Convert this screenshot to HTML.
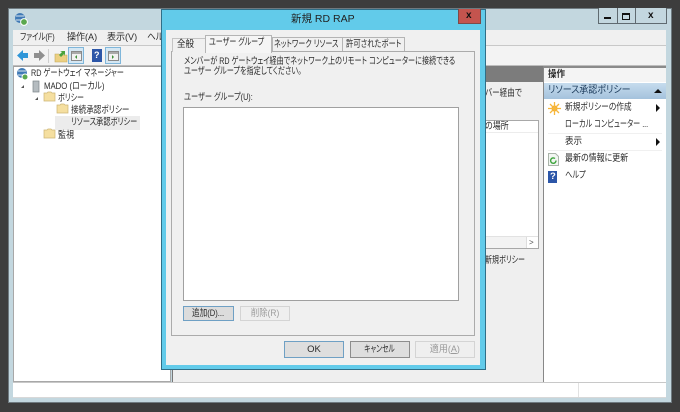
<!DOCTYPE html>
<html lang="ja"><head><meta charset="utf-8">
<style>
html,body{margin:0;padding:0;width:680px;height:412px;overflow:hidden;background:#3d3d3d}
body{position:relative;font-family:"Liberation Sans","Noto Sans CJK JP",sans-serif;font-size:9.500px;color:#2a2a2a;line-height:11px;font-feature-settings:"palt"}
.a{position:absolute;box-sizing:border-box}
.t{position:absolute;white-space:nowrap;filter:blur(.3px);transform-origin:0 50%}
.btn{position:absolute;box-sizing:border-box;text-align:center;white-space:nowrap;background:#e1e1e1;border:1px solid #adadad}
.btn span{display:inline-block;filter:blur(.3px)}
</style></head><body>
<!-- main window -->
<div class="a" style="left:8px;top:8px;width:664px;height:395px;background:#c3d7df;border:1px solid #6f7a80"></div>
<svg class="a" style="left:14px;top:12px" width="14" height="14" viewBox="0 0 14 14"><circle cx="6" cy="6" r="5" fill="#3f79b5"/><path d="M2 4h8M2 8h8" stroke="#dbe6ee"/><circle cx="10" cy="10" r="3.4" fill="#5aa84f" stroke="#fff"/></svg>
<!-- window buttons -->
<div class="a" style="left:598px;top:8px;width:69px;height:16px;background:#c3d7df;border:1px solid #5f6a70;border-top:0"></div>
<div class="a" style="left:617px;top:8px;width:1px;height:15px;background:#5f6a70"></div>
<div class="a" style="left:635px;top:8px;width:1px;height:15px;background:#5f6a70"></div>
<div class="a" style="left:604px;top:17px;width:7px;height:2px;background:#111"></div>
<div class="a" style="left:622px;top:13px;width:8px;height:7px;border:1px solid #111;border-top-width:2px"></div>
<div class="t" style="left:648px;top:10px;font-size:10px;font-weight:bold;color:#111">x</div>
<!-- menu and toolbar -->
<div class="a" style="left:13px;top:30px;width:653px;height:16px;background:#f0f0f0;border-bottom:1px solid #c8c8c8"></div>
<div class="a" style="left:13px;top:46px;width:653px;height:20px;background:#f3f3f3;border-bottom:1px solid #bdbdbd"></div>
<div class="t" style="left:20px;top:32px;transform:scaleX(.77)">ファイル(F)</div>
<div class="t" style="left:67px;top:32px;transform:scaleX(.95)">操作(A)</div>
<div class="t" style="left:107px;top:32px;transform:scaleX(.95)">表示(V)</div>
<div class="t" style="left:147px;top:32px;transform:scaleX(.9)">ヘルプ</div>
<svg class="a" style="left:15px;top:46px" width="112" height="20" viewBox="0 0 112 20">
<path d="M2 9.500 8 4v3h5v5H8v3z" fill="#2f96d8"/>
<path d="M30 9.500 24 4v3h-5v5h5v3z" fill="#8f8f8f"/>
<rect x="33" y="3" width="1" height="14" fill="#cfcfcf"/>
<path d="M40 8h4l1 1h7v7H40z" fill="#ecd082" stroke="#c4a95c" stroke-width=".6"/>
<path d="M44 9l3-3-2-1h5v5l-1-2-3 3z" fill="#4aa33c"/>
<rect x="53.500" y="1.500" width="15" height="16" fill="#d5e7f3" stroke="#7fb6da"/>
<rect x="56.500" y="5.500" width="10" height="9" fill="#f2f2f2" stroke="#8a8a8a"/><path d="M57 6h9v2h-9z" fill="#aaa"/><path d="M62 9v4l-2-2z" fill="#3f8f3a"/>
<rect x="77" y="3" width="10" height="13" fill="#2c56a8"/>
<rect x="90.500" y="1.500" width="15" height="16" fill="#d5e7f3" stroke="#7fb6da"/>
<rect x="93.500" y="5.500" width="10" height="9" fill="#f2f2f2" stroke="#8a8a8a"/><path d="M94 6h9v2h-9z" fill="#aaa"/><path d="M97 9v4l2-2z" fill="#3f8f3a"/>
</svg>
<div class="t" style="left:94px;top:50px;color:#fff;font-size:9px;font-weight:bold">?</div>
<!-- tree panel -->
<div class="a" style="left:13px;top:66px;width:158px;height:316px;background:#fff;border:1px solid #a8a8a8;border-top-color:#a0a0a0"></div>
<svg class="a" style="left:15px;top:67px" width="70" height="76" viewBox="0 0 70 76">
<circle cx="7" cy="6" r="5" fill="#3f79b5"/><path d="M3 4h8M3 8h8" stroke="#dbe6ee"/><circle cx="10" cy="10" r="3" fill="#5aa84f" stroke="#fff"/>
<path d="M6 21l3-3v3z" fill="#555"/><rect x="18" y="14" width="6" height="11" fill="#b5bcc0" stroke="#7c8589" stroke-width=".7"/>
<path d="M20 33l3-3v3z" fill="#555"/><path d="M29 26h3l1-1h3l1 1h3v8H29z" fill="#f5dfa0" stroke="#cdb574" stroke-width=".7"/>
<path d="M42 38h3l1-1h3l1 1h3v8H42z" fill="#f5dfa0" stroke="#cdb574" stroke-width=".7"/>
<path d="M42 51h3l1-1h3l1 1h3v8H42z" fill="#f5dfa0" stroke="#cdb574" stroke-width=".7"/>
<path d="M29 63h3l1-1h3l1 1h3v8H29z" fill="#f5dfa0" stroke="#cdb574" stroke-width=".7"/>
</svg>
<div class="a" style="left:55px;top:116px;width:85px;height:14px;background:#ececec"></div>
<div class="t" style="left:31px;top:68px;transform:scaleX(.76)">RD ゲートウェイ マネージャー</div>
<div class="t" style="left:44px;top:81px;transform:scaleX(.82)">MADO (ローカル)</div>
<div class="t" style="left:58px;top:93px;transform:scaleX(.74)">ポリシー</div>
<div class="t" style="left:71px;top:105px;transform:scaleX(.8)">接続承認ポリシー</div>
<div class="t" style="left:71px;top:117px;transform:scaleX(.76)">リソース承認ポリシー</div>
<div class="t" style="left:58px;top:130px;transform:scaleX(.85)">監視</div>
<!-- middle panel -->
<div class="a" style="left:172px;top:66px;width:372px;height:316px;background:#efefef;border-left:1px solid #777;border-right:1px solid #888"></div>
<div class="a" style="left:173px;top:66px;width:370px;height:16px;background:#7c7c7c"></div>
<div class="t" style="left:485px;top:88px;transform:scaleX(.8)">バー経由で</div>
<div class="a" style="left:175px;top:120px;width:364px;height:129px;background:#fff;border:1px solid #a8a8a8"></div>
<div class="t" style="left:485px;top:121px;transform:scaleX(.84)">の場所</div>
<div class="a" style="left:176px;top:132px;width:362px;height:1px;background:#ececec"></div>
<div class="a" style="left:176px;top:236px;width:362px;height:12px;background:#f3f3f3;border-top:1px solid #e2e2e2"></div>
<div class="a" style="left:526px;top:237px;width:12px;height:11px;background:#fff;border-left:1px solid #ddd"></div>
<div class="t" style="left:529px;top:237px;color:#555;font-size:8px">&gt;</div>
<div class="t" style="left:485px;top:255px;transform:scaleX(.74)">新規ポリシー</div>
<!-- action panel -->
<div class="a" style="left:544px;top:66px;width:122px;height:316px;background:#fff;border-top:2px solid #8a8a8a"></div>
<div class="a" style="left:544px;top:68px;width:122px;height:14px;background:#f4f4f4"></div>
<div class="t" style="left:548px;top:69px;font-weight:bold;transform:scaleX(.9)">操作</div>
<div class="a" style="left:544px;top:83px;width:122px;height:16px;background:linear-gradient(#c6dcee,#a4c2dc)"></div>
<div class="t" style="left:548px;top:85px;font-size:10px;color:#1d3c5c;transform:scaleX(.9)">リソース承認ポリシー</div>
<div class="a" style="left:654px;top:89px;border:4px solid transparent;border-bottom:4px solid #111;border-top:0;width:0;height:0"></div>
<svg class="a" style="left:547px;top:101px" width="15" height="15" viewBox="0 0 15 15"><circle cx="7.500" cy="7.500" r="3" fill="#f5a623"/><path d="M7.500 1v13M1 7.500h13M3 3l9 9M12 3l-9 9" stroke="#f6b73c" stroke-width="1.300"/></svg>
<div class="t" style="left:565px;top:102px;transform:scaleX(.81)">新規ポリシーの作成</div>
<div class="a" style="left:656px;top:104px;border:4px solid transparent;border-left:4px solid #111;border-right:0;width:0;height:0"></div>
<div class="t" style="left:565px;top:119px;transform:scaleX(.75)">ローカル コンピューター ...</div>
<div class="a" style="left:548px;top:133px;width:114px;height:1px;background:#f0f0f0"></div>
<div class="t" style="left:565px;top:136px;transform:scaleX(.9)">表示</div>
<div class="a" style="left:656px;top:138px;border:4px solid transparent;border-left:4px solid #111;border-right:0;width:0;height:0"></div>
<div class="a" style="left:548px;top:150px;width:114px;height:1px;background:#f0f0f0"></div>
<svg class="a" style="left:548px;top:153px" width="11" height="13" viewBox="0 0 11 13"><path d="M.5.500h7l3 3v9H.5z" fill="#f2f6f2" stroke="#aab4aa"/><path d="M8 7.500a2.700 2.700 0 1 1-1-2" fill="none" stroke="#3ba33b" stroke-width="1.400"/></svg>
<div class="t" style="left:565px;top:153px;transform:scaleX(.84)">最新の情報に更新</div>
<div class="a" style="left:548px;top:171px;width:9px;height:12px;background:#2c56a8"></div>
<div class="t" style="left:550px;top:171px;color:#fff;font-weight:bold">?</div>
<div class="t" style="left:565px;top:170px;transform:scaleX(.76)">ヘルプ</div>
<!-- status bar -->
<div class="a" style="left:13px;top:382px;width:653px;height:16px;background:#fff;border-top:1px solid #c8c8c8;border-bottom:1px solid #d8d8d8"></div>
<div class="a" style="left:578px;top:383px;width:1px;height:14px;background:#e2e2e2"></div>
<!-- dialog -->
<div class="a" style="left:161px;top:9px;width:325px;height:361px;background:#62cbea;border:1px solid #2f6f88"></div>
<div class="a" style="left:166px;top:30px;width:314px;height:335px;background:#f0f0f0"></div>
<div class="t" style="left:291px;top:14px;font-size:10.500px;color:#222">新規 RD RAP</div>
<div class="a" style="left:458px;top:9px;width:23px;height:15px;background:#c4544e;border:1px solid #7e4a48;border-top:0"></div>
<div class="t" style="left:466px;top:10px;font-size:10px;font-weight:bold;color:#111">x</div>
<!-- tabs -->
<div class="a" style="left:171px;top:51px;width:304px;height:285px;background:#f0f0f0;border:1px solid #ababab"></div>
<div class="a" style="left:172px;top:38px;width:34px;height:14px;background:#f0f0f0;border:1px solid #c4c4c4;border-bottom:0"></div>
<div class="a" style="left:272px;top:37px;width:71px;height:14px;background:#f0f0f0;border:1px solid #b4b4b4;border-bottom:0"></div>
<div class="a" style="left:342px;top:37px;width:63px;height:14px;background:#f0f0f0;border:1px solid #b4b4b4;border-bottom:0"></div>
<div class="a" style="left:205px;top:35px;width:67px;height:18px;background:#f5f5f5;border:1px solid #b4b4b4;border-bottom:0"></div>
<div class="t" style="left:177px;top:39px;transform:scaleX(.9)">全般</div>
<div class="t" style="left:209px;top:37px;transform:scaleX(.74)">ユーザー グループ</div>
<div class="t" style="left:274px;top:39px;transform:scaleX(.75)">ネットワーク リソース</div>
<div class="t" style="left:346px;top:39px;transform:scaleX(.77)">許可されたポート</div>
<div class="t" style="left:184px;top:57px;line-height:9.500px;transform:scaleX(.75)">メンバーが RD ゲートウェイ経由でネットワーク上のリモート コンピューターに接続できる<br>ユーザー グループを指定してください。</div>
<div class="t" style="left:184px;top:92px;transform:scaleX(.76)">ユーザー グループ(U):</div>
<div class="a" style="left:183px;top:107px;width:276px;height:194px;background:#fff;border:1px solid #a0a0a0"></div>
<div class="btn" style="left:183px;top:306px;width:51px;height:15px;background:#dcdcdc;border-color:#6fa0c4;line-height:13px"><span style="transform:scaleX(.8)">追加(D)...</span></div>
<div class="btn" style="left:240px;top:306px;width:50px;height:15px;background:#efefef;border-color:#d4d4d4;color:#9a9a9a;line-height:13px"><span style="transform:scaleX(.88)">削除(R)</span></div>
<div class="btn" style="left:284px;top:341px;width:60px;height:17px;background:#dedede;border-color:#6fa0c4;line-height:15px"><span>OK</span></div>
<div class="btn" style="left:350px;top:341px;width:60px;height:17px;background:#dedede;border-color:#8d8d8d;line-height:15px"><span style="transform:scaleX(.71)">キャンセル</span></div>
<div class="btn" style="left:415px;top:341px;width:60px;height:17px;background:#efefef;border-color:#d4d4d4;color:#9a9a9a;line-height:15px"><span style="transform:scaleX(.95)">適用(<u>A</u>)</span></div>
</body></html>
